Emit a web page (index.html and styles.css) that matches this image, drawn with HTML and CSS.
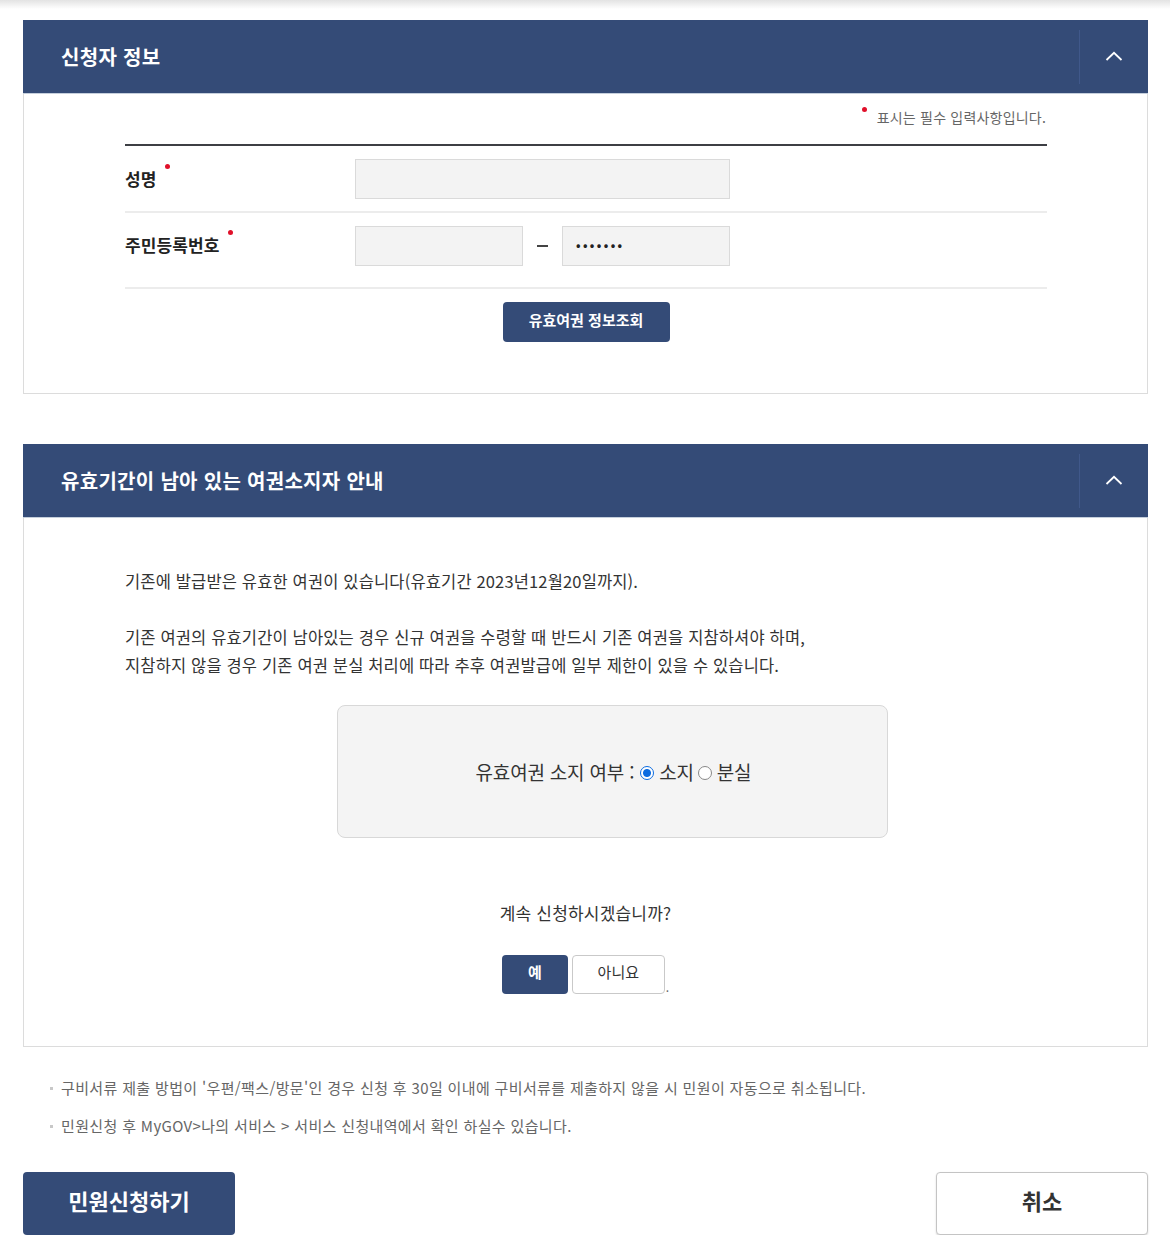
FILE: index.html
```html
<!DOCTYPE html>
<html lang="ko">
<head>
<meta charset="utf-8">
<link rel="stylesheet" href="styles.css">
</head>
<body>
<div class="page">
  <section class="panel">
    <header class="panel-head">
      <h2 class="panel-title">신청자 정보</h2>
      <button class="toggle" aria-label="접기">
        <svg width="18" height="10" viewBox="0 0 18 10"><path d="M1.5 9 L9 1.8 L16.5 9" fill="none" stroke="#fff" stroke-width="1.8"/></svg>
      </button>
    </header>
    <div class="panel-body form-body">
      <p class="req-note"><span class="req-dot"></span>표시는 필수 입력사항입니다.</p>
      <div class="form">
        <div class="form-row row-name">
          <div class="form-label">성명<span class="req-dot sup"></span></div>
          <div class="form-field"><div class="input wide"></div></div>
        </div>
        <div class="form-row row-id">
          <div class="form-label">주민등록번호<span class="req-dot sup"></span></div>
          <div class="form-field">
            <div class="input half"></div>
            <span class="dash"></span>
            <div class="input half pw">•••••••</div>
          </div>
        </div>
      </div>
      <div class="center"><button class="btn-navy btn-query">유효여권 정보조회</button></div>
    </div>
  </section>

  <section class="panel panel-2">
    <header class="panel-head">
      <h2 class="panel-title">유효기간이 남아 있는 여권소지자 안내</h2>
      <button class="toggle" aria-label="접기">
        <svg width="18" height="10" viewBox="0 0 18 10"><path d="M1.5 9 L9 1.8 L16.5 9" fill="none" stroke="#fff" stroke-width="1.8"/></svg>
      </button>
    </header>
    <div class="panel-body info-body">
      <p class="info-text">기존에 발급받은 유효한 여권이 있습니다(유효기간 2023년12월20일까지).</p>
      <p class="info-text gap">기존 여권의 유효기간이 남아있는 경우 신규 여권을 수령할 때 반드시 기존 여권을 지참하셔야 하며,<br>지참하지 않을 경우 기존 여권 분실 처리에 따라 추후 여권발급에 일부 제한이 있을 수 있습니다.</p>
      <div class="own-box">
        <span>유효여권 소지 여부 :</span>
        <span class="radio on"></span><span>소지</span><span class="radio"></span><span>분실</span>
      </div>
      <p class="confirm">계속 신청하시겠습니까?</p>
      <div class="center confirm-btns">
        <button class="btn-navy btn-yes">예</button>
        <button class="btn-white btn-no">아니요</button><span class="dot">.</span>
      </div>
    </div>
  </section>

  <ul class="notes">
    <li>구비서류 제출 방법이 '우편/팩스/방문'인 경우 신청 후 30일 이내에 구비서류를 제출하지 않을 시 민원이 자동으로 취소됩니다.</li>
    <li>민원신청 후 MyGOV&gt;나의 서비스 &gt; 서비스 신청내역에서 확인 하실수 있습니다.</li>
  </ul>

  <div class="actions">
    <button class="btn-navy btn-big">민원신청하기</button>
    <button class="btn-white btn-big btn-cancel">취소</button>
  </div>
</div>
</body>
</html>
```

FILE: styles.css
```css
* { box-sizing: border-box; }
html, body { margin: 0; padding: 0; }
body {
  font-family: "Noto Sans CJK KR", "Noto Sans", sans-serif;
  color: #333;
  background: linear-gradient(#e3e3e3, #fff 9px) no-repeat #fff;
  width: 1170px;
}
.page { padding: 20px 22px 0 23px; }
button { font-family: inherit; cursor: pointer; }

.panel { width: 1125px; }
.panel-2 { margin-top: 50px; }
.panel-head {
  height: 74px;
  background: #344b77;
  display: flex;
  align-items: center;
  justify-content: space-between;
  border-bottom: 1px solid #c5cfdc;
}
.panel-title {
  margin: 0 0 0 38px;
  font-size: 20px;
  font-weight: 700;
  color: #fff;
  letter-spacing: 0.3px;
  line-height: 1;
}
.toggle {
  width: 69px;
  height: 54px;
  border: 0;
  border-left: 1px solid #40588a;
  background: transparent;
  display: flex;
  align-items: center;
  justify-content: center;
  padding: 0 0 2px 0;
}
.panel-body {
  border: 1px solid #dcdcdc;
  border-top: 0;
}

/* form */
.form-body { padding: 6px 100px 51px 101px; }
.req-note {
  margin: 0;
  text-align: right;
  font-size: 14px;
  letter-spacing: 0.2px;
  color: #666;
  line-height: 34px;
  height: 44px;
  padding-right: 1px;
}
.req-dot {
  display: inline-block;
  width: 5px;
  height: 5px;
  border-radius: 50%;
  background: #e0102a;
  vertical-align: top;
  margin: 7px 10px 0 0;
}
.req-dot.sup { margin: -6px 0 0 9px; }
.form { border-top: 2px solid #3d3f44; }
.form-row {
  display: flex;
  align-items: center;
  border-bottom: 2px solid #ececec;
}
.row-name { height: 67px; }
.row-id { height: 76px; align-items: flex-start; padding-top: 13px; }
.form-label {
  width: 230px;
  font-size: 17px;
  font-weight: 700;
  color: #222;
  letter-spacing: 0.1px;
  line-height: 1;
}
.row-id .form-label { padding-top: 10px; }
.form-field { display: flex; align-items: center; }
.input {
  height: 40px;
  background: #f3f3f3;
  border: 1px solid #dadada;
}
.input.wide { width: 375px; }
.input.half { width: 168px; }
.dash {
  width: 11px;
  height: 2px;
  background: #444;
  margin: 0 14px;
}
.input.pw {
  font-size: 12px;
  color: #222;
  padding-left: 13px;
  line-height: 36px;
  letter-spacing: 2.4px;
  font-weight: 700;
}
.center { text-align: center; }
.btn-navy {
  background: #344b77;
  color: #fff;
  border: 0;
  border-radius: 4px;
  font-weight: 700;
}
.btn-query {
  margin-top: 13px;
  width: 167px;
  height: 40px;
  font-size: 15px;
  letter-spacing: 0;
  padding-bottom: 6px;
}

/* info */
.info-body { padding: 49px 24px 52px 101px; }
.info-text {
  margin: 0;
  font-size: 16.5px;
  letter-spacing: 0.15px;
  line-height: 28px;
  color: #333;
}
.info-text.gap { margin-top: 28px; }
.own-box {
  margin: 26px 0 0 212px;
  width: 551px;
  height: 133px;
  background: #f4f4f4;
  border: 1px solid #d8d8d8;
  border-radius: 8px;
  display: flex;
  align-items: center;
  justify-content: center;
  font-size: 19px;
  color: #333;
  letter-spacing: -0.2px;
  padding-left: 2px;
}
.radio {
  width: 14px;
  height: 14px;
  border-radius: 50%;
  border: 1px solid #888;
  background: #fff;
  margin: 2px 5px 0 4px;
}
.radio.on {
  border-color: #0b6be0;
  background: radial-gradient(circle, #0b6be0 0 3.5px, #fff 4.5px);
  margin: 2px 5px 0 6px;
}
.confirm {
  margin: 63px 0 0 -77px;
  text-align: center;
  font-size: 17px;
  letter-spacing: 0.2px;
  line-height: 24px;
  color: #333;
}
.confirm-btns {
  margin: 30px 0 0 -77px;
  display: flex;
  justify-content: center;
  align-items: flex-end;
}
.btn-yes {
  width: 66px;
  height: 39px;
  font-size: 15px;
  margin-right: 4px;
  padding-bottom: 7px;
}
.btn-white {
  background: #fff;
  border: 1px solid #c9c9c9;
  border-radius: 4px;
  color: #333;
}
.btn-no {
  width: 93px;
  height: 39px;
  font-size: 15px;
  margin-right: 1px;
  padding-bottom: 7px;
}
.dot { font-size: 12px; color: #666; line-height: 14px; }

/* notes */
.notes {
  list-style: none;
  margin: 22px 0 0;
  padding: 0 0 0 27px;
}
.notes li {
  position: relative;
  padding-left: 11px;
  font-size: 15px;
  letter-spacing: 0.35px;
  color: #666;
  line-height: 38px;
}
.notes li::before {
  content: "";
  position: absolute;
  left: 0;
  top: 18px;
  width: 3px;
  height: 3px;
  background: #c8c8c8;
}

/* actions */
.actions {
  margin-top: 27px;
  display: flex;
  justify-content: space-between;
  width: 1125px;
}
.btn-big {
  width: 212px;
  height: 63px;
  font-size: 22px;
  font-weight: 700;
  letter-spacing: 0;
  border-radius: 4px;
  padding-bottom: 8px;
}
.btn-cancel {
  border-color: #c4c4c4;
  box-shadow: 0 1px 2px rgba(0,0,0,0.15);
  color: #333;
}
```
